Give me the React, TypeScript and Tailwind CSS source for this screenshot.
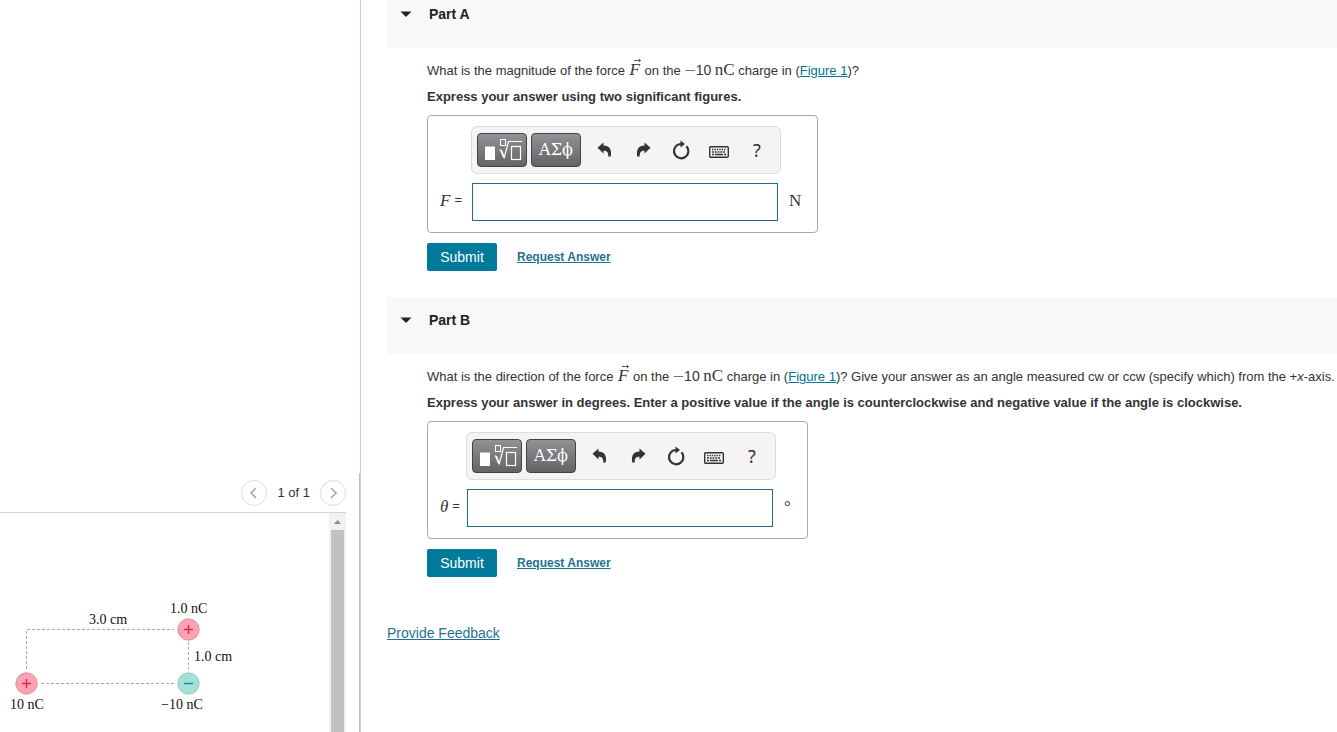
import React, { useState } from 'react';

interface PartProps {
  title: string;
  name: string;
  question: React.ReactNode;
  instructions: string;
  symbol: string;
  unit: React.ReactNode;
  columns: string;
}

const Vector = () => (
  <span className="relative inline-block px-px font-['Liberation_Serif',serif] text-[17px] leading-none italic">
    F
    <svg className="absolute -top-[3px] left-1 h-[5px] w-[9px]" viewBox="0 0 10 5" fill="none" stroke="#333">
      <path d="M1 2.5h7M6.5 0.8 8.5 2.5 6.5 4.2" strokeWidth="0.9" />
    </svg>
  </span>
);

const Charge = () => (
  <>
    <span className="align-[-2px] font-['Liberation_Serif',serif] text-[20px] leading-none text-gray-500">−</span>
    <span className="text-[14px] leading-none">10</span>{' '}
    <span className="font-['Liberation_Serif',serif] text-[17px] leading-none">nC</span>
  </>
);

const FigureLink = () => (
  <a href="#figure" className="text-[#00758f] underline">Figure 1</a>
);

const UndoIcon = () => (
  <svg className="h-4 w-4" viewBox="0 0 16 16" fill="#333">
    <path d="M0.500 5.800 6.500 0.500v3C12 3.500 15 7 13.800 14.500h-2.600c0.400-3.800-1-5.800-4.700-5.800V11.500z" />
  </svg>
);

const RedoIcon = () => (
  <svg className="h-4 w-4" viewBox="0 0 16 16" fill="#333">
    <path d="M15.500 5.800 9.500 0.500v3C4 3.500 1 7 2.200 14.500h2.600c-0.400-3.800 1-5.800 4.700-5.800V11.500z" />
  </svg>
);

const ResetIcon = () => (
  <svg className="h-5 w-5" viewBox="0 0 20 20">
    <path d="M15.500 6.200A7.200 7.200 0 1 1 6.500 4.900Q8.200 4 10.500 4" fill="none" stroke="#333" strokeWidth="2.200" />
    <path d="M9.500 0.500 14 4 9.500 7.500z" fill="#333" />
  </svg>
);

const KeyboardIcon = () => (
  <svg className="mt-1 h-3 w-5" viewBox="0 0 20 12" fill="none" stroke="#333">
    <rect x="0.700" y="0.700" width="18.600" height="10.600" rx="1" strokeWidth="1.400" />
    <path d="M3 3.500h14" strokeWidth="1.300" strokeDasharray="1.400 1" />
    <path d="M3 6h14" strokeWidth="1.300" strokeDasharray="1.800 1" />
    <path d="M3 8.500h2M6 8.500h8M15 8.500h2" strokeWidth="1.300" />
  </svg>
);

const TemplateIcon = () => (
  <svg className="h-6 w-10" viewBox="0 0 40 24" fill="none" stroke="#fff">
    <rect x="3" y="8.500" width="10" height="13.500" fill="#fff" stroke="none" />
    <rect x="18.500" y="1.500" width="5" height="6" strokeWidth="1" />
    <path d="M17.500 12h1.500" strokeWidth="1.200" />
    <path d="m19 12 3 7.500" strokeWidth="2" />
    <path d="M22 20.500 26.500 3.500H40" strokeWidth="1.200" />
    <rect x="29.500" y="8.500" width="9" height="13" strokeWidth="1.200" />
  </svg>
);

const tools = [
  { label: 'Undo', icon: <UndoIcon /> },
  { label: 'Redo', icon: <RedoIcon /> },
  { label: 'Reset', icon: <ResetIcon /> },
  { label: 'Keyboard shortcuts', icon: <KeyboardIcon /> },
  { label: 'Help', icon: <span className="font-['Noto_Sans',sans-serif] text-[18px] leading-5">?</span> },
];

const darkButton =
  'flex h-[34px] w-[50px] items-center justify-center rounded border border-[#444] bg-linear-to-b from-[#929296] to-[#646466] text-white';

const Toolbar = () => (
  <div className="flex h-12 items-center rounded-md border border-[#dcdcdc] bg-[#f4f4f4] pl-[5px]">
    <button type="button" aria-label="Templates" className={darkButton}>
      <TemplateIcon />
    </button>
    <button type="button" className={`${darkButton} ml-1 mr-[5px] font-['DejaVu_Serif',serif] text-[16px]`}>
      ΑΣϕ
    </button>
    {tools.map(tool => (
      <button
        key={tool.label}
        type="button"
        aria-label={tool.label}
        className="flex h-8 w-[38px] items-center justify-center text-[#333]"
      >
        {tool.icon}
      </button>
    ))}
  </div>
);

const Part: React.FC<PartProps> = ({ title, name, question, instructions, symbol, unit, columns }) => {
  const [open, setOpen] = useState(true);
  const [answer, setAnswer] = useState('');

  return (
    <section className="mb-[26px]">
      <h2 className="h-[57px] bg-[#f8f8f8] pt-[14px] pl-3">
        <button
          type="button"
          aria-expanded={open}
          onClick={() => setOpen(!open)}
          className="flex items-center gap-4 text-[14px] leading-[18px] font-bold text-[#222]"
        >
          <svg className="h-3.5 w-3.5" viewBox="0 0 14 14" fill="#222">
            <path d="M1.500 4.500h11L7 10z" />
          </svg>
          {title}
        </button>
      </h2>
      {open && (
        <form className="pt-[10px] pl-10" onSubmit={e => e.preventDefault()}>
          <p className="h-[26px] leading-[26px] whitespace-nowrap">{question}</p>
          <p className="leading-[26px] font-bold whitespace-nowrap">{instructions}</p>
          <div className={`mt-[5px] grid w-fit gap-y-[9px] rounded border border-[#aaa] pt-[10px] pb-[11px] pl-3 ${columns}`}>
            <div className="col-start-2">
              <Toolbar />
            </div>
            <label htmlFor={name} className="col-start-1 flex items-center gap-1 pb-1 whitespace-nowrap">
              <span className="font-['Liberation_Serif',serif] text-[17px] leading-none italic">{symbol}</span> =
            </label>
            <input
              id={name}
              type="text"
              value={answer}
              onChange={e => setAnswer(e.target.value)}
              className="ml-px h-[38px] w-[306px] border border-[#1f6f80] bg-white px-2 text-base outline-none"
            />
            <span className="self-center pb-1 pl-2 font-['Liberation_Serif',serif] text-[17px] leading-none">{unit}</span>
          </div>
          <div className="mt-[10px] flex items-center gap-5">
            <button type="submit" className="h-7 w-[70px] rounded-xs bg-[#007a9b] text-[14px] text-white">
              Submit
            </button>
            <a href="#answer" className="text-[12px] font-bold text-[#1f7391] underline">Request Answer</a>
          </div>
        </form>
      )}
    </section>
  );
};

const PlusCharge = ({ x, y }: { x: number; y: number }) => (
  <g transform={`translate(${x} ${y})`}>
    <circle r="10.700" fill="#fba3b3" stroke="#d98593" strokeWidth="0.800" />
    <path d="M-4.500 0h9M0-4.500v9" stroke="#e0294f" strokeWidth="1.400" />
  </g>
);

const ChargeFigure = () => (
  <svg className="h-[120px] w-[240px]" viewBox="0 0 240 120" role="img" aria-label="Three point charges">
    <g stroke="#aaa" fill="none" strokeDasharray="3 2">
      <path d="M26.500 69V29.500H174M188.500 42v27M41 83.500h134" />
    </g>
    <PlusCharge x={188.5} y={29.5} />
    <PlusCharge x={26.5} y={83.5} />
    <circle cx="188.500" cy="83.500" r="10.700" fill="#a3e0da" stroke="#7fc5be" strokeWidth="0.800" />
    <path d="M184 83.500h9" stroke="#1b8a85" strokeWidth="1.400" />
    <g fill="#111" fontFamily="'Liberation Serif', serif" fontSize="14">
      <text x="89" y="24">3.0 cm</text>
      <text x="170" y="13">1.0 nC</text>
      <text x="194" y="61">1.0 cm</text>
      <text x="10" y="109">10 nC</text>
      <text x="161" y="109">−10 nC</text>
    </g>
  </svg>
);

const PagerButton = ({ label, d }: { label: string; d: string }) => (
  <button
    type="button"
    aria-label={label}
    className="flex h-[26px] w-[26px] items-center justify-center rounded-full border border-[#dedede]"
  >
    <svg className="h-3.5 w-3.5" viewBox="0 0 14 14" fill="none" stroke="#aaa" strokeWidth="1.700">
      <path d={d} />
    </svg>
  </button>
);

const FigurePanel = () => (
  <aside className="sticky top-0 flex h-screen w-[361px] shrink-0 flex-col border-r border-[#c0ced8]">
    <div className="flex-1"></div>
    <div id="figure" className="border-r border-[#b9c3ca]">
      <div className="flex h-[39px] items-center justify-end gap-[10px] pr-[13px]">
        <PagerButton label="Previous figure" d="M9 2 4 7l5 5" />
        <span>1 of 1</span>
        <PagerButton label="Next figure" d="M5 2l5 5-5 5" />
      </div>
      <div className="mr-[13px] flex h-[220px] justify-between border-t border-[#d5d5d5]">
        <div className="pt-[87px]">
          <ChargeFigure />
        </div>
        {/* scroll track */}
        <div className="flex w-[17px] flex-col bg-[#f1f1f1]">
          <svg className="h-[17px] w-[17px]" viewBox="0 0 17 17" fill="#8a8a8a">
            <path d="M5 11h7L8.500 7z" />
          </svg>
          <div className="mx-0.5 flex-1 bg-[#c1c1c1]"></div>
        </div>
      </div>
    </div>
  </aside>
);

const App: React.FC = () => (
  <div className="flex min-h-screen bg-white font-['Liberation_Sans',Arial,sans-serif] text-[13px] text-[#333]">
    <FigurePanel />
    <main className="-mt-[9px] min-w-0 flex-1 overflow-hidden pl-[26px]">
      <Part
        title="Part A"
        name="force"
        question={<>What is the magnitude of the force <Vector /> on the <Charge /> charge in (<FigureLink />)?</>}
        instructions="Express your answer using two significant figures."
        symbol="F"
        unit="N"
        columns="grid-cols-[31px_310px_36px]"
      />
      <Part
        title="Part B"
        name="angle"
        question={
          <>
            What is the direction of the force <Vector /> on the <Charge /> charge in (<FigureLink />)? Give your answer
            as an angle measured cw or ccw (specify which) from the +<i>x</i>-axis.
          </>
        }
        instructions="Express your answer in degrees. Enter a positive value if the angle is counterclockwise and negative value if the angle is clockwise."
        symbol="θ"
        unit="°"
        columns="grid-cols-[26px_310px_31px]"
      />
      <a href="#feedback" className="mt-5 inline-block text-[14px] leading-5 text-[#1f7391] underline">
        Provide Feedback
      </a>
    </main>
  </div>
);

export default App;
